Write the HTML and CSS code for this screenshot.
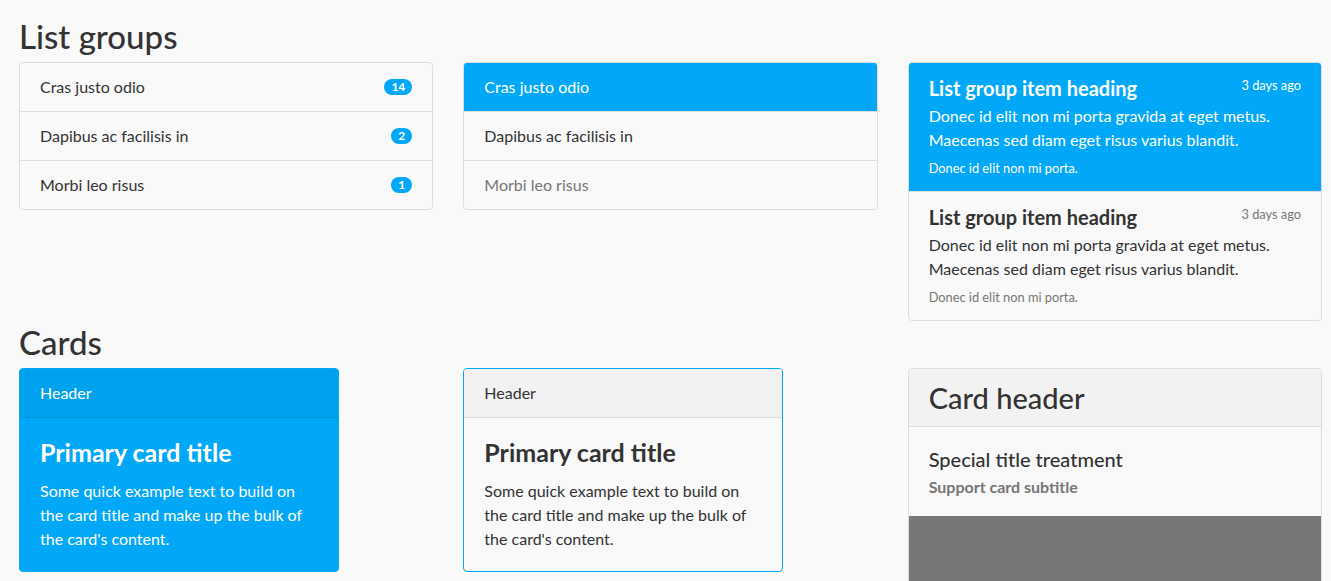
FILE: index.html
```html
<!DOCTYPE html>
<html lang="en">
<head>
<meta charset="utf-8">
<title>List groups and Cards</title>
<link rel="stylesheet" href="styles.css">
</head>
<body>
<div class="page">
  <h2 class="section-title">List groups</h2>
  <div class="row">
    <ul class="list-group">
      <li class="lg-item lg-flex">Cras justo odio <span class="badge">14</span></li>
      <li class="lg-item lg-flex">Dapibus ac facilisis in <span class="badge">2</span></li>
      <li class="lg-item lg-flex">Morbi leo risus <span class="badge">1</span></li>
    </ul>
    <div class="list-group">
      <a class="lg-item active">Cras justo odio</a>
      <a class="lg-item">Dapibus ac facilisis in</a>
      <a class="lg-item disabled">Morbi leo risus</a>
    </div>
    <div class="list-group">
      <a class="lg-item lg-rich active">
        <div class="lg-head">
          <h5 class="lg-heading">List group item heading</h5>
          <small class="lg-when">3 days ago</small>
        </div>
        <p class="lg-text">Donec id elit non mi porta gravida at eget metus. Maecenas sed diam eget risus varius blandit.</p>
        <small class="lg-note">Donec id elit non mi porta.</small>
      </a>
      <a class="lg-item lg-rich">
        <div class="lg-head">
          <h5 class="lg-heading">List group item heading</h5>
          <small class="lg-when muted">3 days ago</small>
        </div>
        <p class="lg-text">Donec id elit non mi porta gravida at eget metus. Maecenas sed diam eget risus varius blandit.</p>
        <small class="lg-note muted">Donec id elit non mi porta.</small>
      </a>
    </div>
  </div>

  <h2 class="section-title">Cards</h2>
  <div class="row">
    <div class="col">
      <div class="card card-primary">
        <div class="card-header">Header</div>
        <div class="card-body">
          <h4 class="card-title">Primary card title</h4>
          <p class="card-text">Some quick example text to build on the card title and make up the bulk of the card's content.</p>
        </div>
      </div>
    </div>
    <div class="col">
      <div class="card card-outline">
        <div class="card-header">Header</div>
        <div class="card-body">
          <h4 class="card-title">Primary card title</h4>
          <p class="card-text">Some quick example text to build on the card title and make up the bulk of the card's content.</p>
        </div>
      </div>
    </div>
    <div class="col">
      <div class="card card-full">
        <h3 class="card-header big-header">Card header</h3>
        <div class="card-body">
          <h5 class="card-title small-title">Special title treatment</h5>
          <h6 class="card-subtitle">Support card subtitle</h6>
        </div>
        <div class="card-image"></div>
      </div>
    </div>
  </div>
</div>
</body>
</html>
```

FILE: styles.css
```css
* { box-sizing: border-box; }
html, body { margin: 0; padding: 0; }
body {
  background: #f9f9f9;
  color: #333333;
  font-family: "Lato", "Liberation Sans", sans-serif;
  font-size: 16px;
  line-height: 1.5;
  overflow: hidden;
}
.page { padding: 15px 9px 0 19px; }
h2, h3, h4, h5, h6, p { margin: 0; }
.section-title {
  font-size: 33px;
  font-weight: 500;
  line-height: 36px;
  padding-top: 3px;
  margin-bottom: 8px;
  color: #333;
}
.row {
  display: grid;
  grid-template-columns: 1fr 1fr 1fr;
  column-gap: 30px;
  align-items: start;
}
.list-group {
  list-style: none;
  margin: 0;
  padding: 0;
  border: 1px solid #dddddd;
  border-radius: 4px;
  overflow: hidden;
}
.lg-item {
  display: block;
  padding: 12px 20px;
  line-height: 24px;
  color: #333;
  text-decoration: none;
  border-top: 1px solid #dddddd;
}
.lg-item:first-child { border-top: 0; }
.lg-flex { display: flex; justify-content: space-between; align-items: center; }
.lg-item.active { background: #00a8f7; color: #fff; border-color: #00a8f7; }
.lg-item.disabled { color: #777; }
.badge {
  display: inline-block;
  min-width: 20px;
  padding: 0 7px;
  height: 16px;
  line-height: 16px;
  border-radius: 10px;
  background: #00a8f7;
  color: #fff;
  font-size: 12px;
  font-weight: 700;
  text-align: center;
}
.lg-rich { padding-top: 13px; padding-bottom: 13px; }
.lg-head { display: flex; justify-content: space-between; align-items: flex-start; margin-bottom: 4px; }
.lg-heading { font-size: 20px; line-height: 24px; font-weight: 700; }
.lg-when { font-size: 12.8px; line-height: 19px; }
.lg-text { line-height: 24px; margin-bottom: 6px; }
.lg-note { display: block; font-size: 12.8px; line-height: 20px; }
.muted { color: #777; }

.card {
  border: 1px solid #dddddd;
  border-radius: 4px;
  overflow: hidden;
}
.card-primary, .card-outline { width: 320px; }
.card-primary { background: #00a8f7; border-color: #00a8f7; color: #fff; }
.card-outline { border-color: #00a8f7; }
.card-header {
  padding: 12px 20px;
  line-height: 24px;
  background: #f2f2f2;
  border-bottom: 1px solid #dddddd;
}
.card-primary .card-header { background: #00a2ee; border-bottom-color: #0099e0; }
.card-body { padding: 20px; }
.card-title { font-size: 25px; line-height: 29px; font-weight: 700; margin-bottom: 12px; }
.card-text { line-height: 24px; }
.big-header { font-size: 29px; line-height: 33px; font-weight: 500; }
.small-title { font-size: 20px; line-height: 24px; font-weight: 500; }
.card-subtitle { font-size: 16px; line-height: 19px; font-weight: 700; color: #777; margin-top: -6px; }
.card-image { height: 80px; background: #777777; }
```
